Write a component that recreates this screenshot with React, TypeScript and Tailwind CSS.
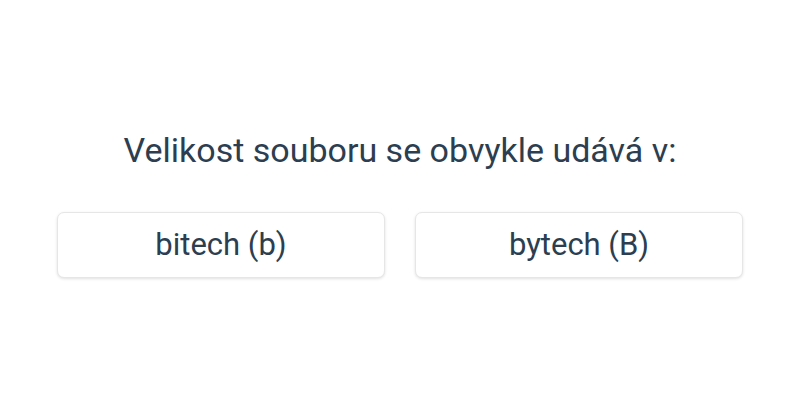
import React from 'react';

const options = ['bitech (b)', 'bytech (B)'];

export default function App() {
  return (
    <div className="flex h-[400px] w-full flex-col items-center bg-white pt-[130px] font-['Roboto',sans-serif] text-[#2c3e50]">
      <h2 className="text-[34px] leading-[40px]">Velikost souboru se obvykle udává v:</h2>
      <div className="mt-[42px] flex gap-[30px]">
        {options.map((o) => (
          <button
            key={o}
            className="flex h-[66px] w-[328px] items-center justify-center rounded-[7px] border border-[#e6e6e6] bg-white text-[31px] text-[#2c3e50] shadow-[0_1px_3px_rgba(0,0,0,0.12)]"
          >
            {o}
          </button>
        ))}
      </div>
    </div>
  );
}
